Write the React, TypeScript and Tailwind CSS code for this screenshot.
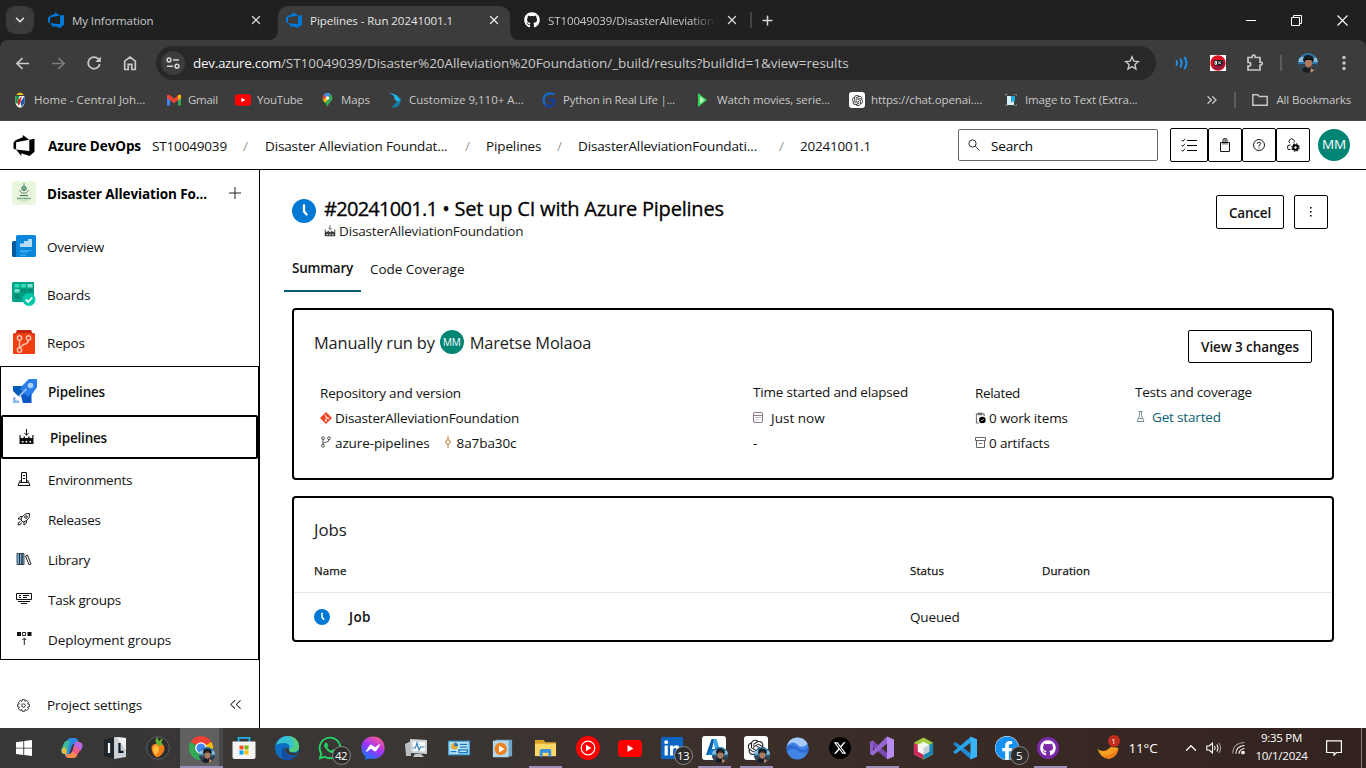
import type { ReactNode } from "react";
import { FaGithub, FaWhatsapp, FaFacebook, FaFacebookMessenger } from "react-icons/fa";
import { FaXTwitter } from "react-icons/fa6";
import { RiOpenaiFill } from "react-icons/ri";
import { X, Plus, ChevronDown, ChevronUp, ChevronsRight, ChevronsLeft } from "lucide-react";

type C = { className?: string };

/* ---------- shared drawings ---------- */

const DevOps = ({ className = "" }: C) => (
  <svg viewBox="0 0 24 24" className={`shrink-0 ${className}`} fill="currentColor">
    <path d="M0 8.877L2.247 5.91l8.405-3.416V.022l7.37 5.393L2.966 8.338v8.225L0 15.707zm24-4.45v14.651l-5.753 4.9-9.303-3.057v3.056l-5.978-7.416 15.057 1.798V5.415z" />
  </svg>
);

const Face = ({ className = "" }: C) => (
  <svg viewBox="0 0 20 20" className={`shrink-0 rounded-full ${className}`}>
    <rect width="20" height="20" fill="#2b78a8" />
    <path d="M0 6q5-4 9-1t11-2v6H0z" fill="#8dbedb" />
    <path d="M0 11h20v9H0z" fill="#34424f" />
    <path d="M5 7.500q0-5.500 5-5.500t6 5l-1 2H6z" fill="#171c25" />
    <ellipse cx="10.500" cy="10" rx="3.600" ry="4.600" fill="#b07a5c" />
    <path d="M7 7h7.500V5.500H7z" fill="#0c0f14" />
    <path d="M3 20q1-6 6-6l1 2 2-2q4 0 5 6z" fill="#1a1c24" />
    <path d="M13 14.500l4 3.500-2 2h-3z" fill="#c08866" />
  </svg>
);

const Youtube = ({ className = "" }: C) => (
  <svg viewBox="0 0 24 17" className={`shrink-0 ${className}`}>
    <rect width="24" height="17" rx="4" fill="#f00" />
    <path d="M9.500 5v7l6-3.500z" fill="#fff" />
  </svg>
);

const Clock = ({ className = "" }: C) => (
  <svg viewBox="0 0 24 24" className={`shrink-0 ${className}`}>
    <circle cx="12" cy="12" r="12" fill="#0078d4" />
    <path d="M12 6.500v6l2.600 3" fill="none" stroke="#fff" strokeWidth="2.300" strokeLinecap="round" strokeLinejoin="round" />
  </svg>
);

const Build = ({ className = "" }: C) => (
  <svg viewBox="0 0 16 16" className={`shrink-0 ${className}`}>
    <path d="M1 6h1.200v3H5V7.500h1.400V9h3.200V7.500H11V9h2.800V6H15v9H1z" fill="#111" />
    <path d="M8 0v6M5.800 4 8 6.200 10.200 4" fill="none" stroke="#111" />
    <path d="M3.500 12H5v1.500H3.500zM7.200 12h1.500v1.500H7.200zM11 12h1.500v1.500H11z" fill="#fff" />
  </svg>
);

/* ---------- browser chrome ---------- */

const Divider = ({ className = "" }: C) => <span className={`h-4 w-[1.500px] shrink-0 bg-[#5c5c5c] ${className}`} />;

function TabStrip() {
  return (
    <div className="flex h-10 shrink-0 bg-[#1f2120] text-[11.5px] tracking-[-0.1px] text-[#c9c9c9]">
      <div className="ml-[6px] mt-[6px] flex h-7 w-7 shrink-0 items-center justify-center rounded-[9px] bg-[#3a3b3a]">
        <ChevronDown className="h-[14px] w-[14px] text-[#e8e8e8]" strokeWidth={2.6} />
      </div>
      <div className="flex w-[234px] items-center pl-[14px]">
        <DevOps className="h-4 w-4 text-[#0078d7]" />
        <span className="ml-2 pt-px">My Information</span>
        <X className="ml-auto mr-[5px] h-[14px] w-[14px] text-[#d5d5d5]" strokeWidth={2.3} />
      </div>
      <svg viewBox="0 0 10 10" className="mt-[30px] h-[10px] w-[10px] text-[#3c3c3c]"><path d="M10 0v10H0Q10 10 10 0z" fill="currentColor" /></svg>
      <div className="mt-[6px] flex w-[232px] items-center rounded-t-[10px] bg-[#3c3c3c] pb-[6px] pl-2 text-[#e6e6e6]">
        <DevOps className="h-4 w-4 text-[#0078d7]" />
        <span className="ml-2 pt-px tracking-[-0.04px]">Pipelines - Run 20241001.1</span>
        <X className="ml-auto mr-[9px] h-[14px] w-[14px]" strokeWidth={2.3} />
      </div>
      <svg viewBox="0 0 10 10" className="mt-[30px] h-[10px] w-[10px] text-[#3c3c3c]"><path d="M0 0v10H10Q0 10 0 0z" fill="currentColor" /></svg>
      <div className="flex w-[231px] items-center pl-1">
        <FaGithub className="h-4 w-4 shrink-0 text-white" />
        <span className="ml-2 w-[168px] overflow-hidden whitespace-nowrap pt-px [mask-image:linear-gradient(90deg,#000_85%,transparent)]">ST10049039/DisasterAlleviation</span>
        <X className="ml-[9px] h-[14px] w-[14px] shrink-0 text-[#d5d5d5]" strokeWidth={2.3} />
      </div>
      <div className="flex items-center">
        <Divider className="-ml-px bg-[#444]" />
        <Plus className="ml-[8px] h-[15px] w-[15px] text-[#d8d8d8]" strokeWidth={2.4} />
      </div>
      <div className="ml-auto mr-[18px] flex items-center gap-[35px]">
        <svg viewBox="0 0 10 10" className="h-[10px] w-[10px]"><path d="M0 5.500h10" stroke="#fff" /></svg>
        <svg viewBox="0 0 11 11" className="h-[11px] w-[11px]"><path d="M.5 2.500h8v8h-8zM2.500 2.500v-2h8v8h-2" fill="none" stroke="#fff" /></svg>
        <svg viewBox="0 0 11 11" className="h-[11px] w-[11px]"><path d="M.5.5l10 10m0-10l-10 10" stroke="#fff" strokeWidth="1.100" /></svg>
      </div>
    </div>
  );
}

function AddressBar() {
  return (
    <div className="shrink-0 bg-[#1f2120]">
      <div className="flex h-[46px] items-center rounded-t-lg bg-[#3c3c3c] pl-[15px] text-[#c8c8c8]">
        <svg viewBox="0 0 16 16" className="h-[15px] w-[15px]"><path d="M15 8H2.500M8 2.200 2 8l6 5.800" fill="none" stroke="currentColor" strokeWidth="1.800" /></svg>
        <svg viewBox="0 0 16 16" className="ml-[21px] h-[15px] w-[15px] text-[#7c7c7c]"><path d="M1 8h12.500M8 2.200 14 8l-6 5.800" fill="none" stroke="currentColor" strokeWidth="1.800" /></svg>
        <svg viewBox="0 0 16 16" className="ml-[20px] h-4 w-4"><path d="M13.700 9a5.800 5.800 0 1 1-1.400-5L14 5.600" fill="none" stroke="currentColor" strokeWidth="1.800" /><path d="M14.800 1.500v5.500H9.300z" fill="currentColor" /></svg>
        <svg viewBox="0 0 16 16" className="ml-[20px] h-4 w-4"><path d="M2.700 6.200 8 2l5.300 4.200v8.300h-3.500V9.300H6.200v5.200H2.700z" fill="none" stroke="currentColor" strokeWidth="1.700" /></svg>
        <div className="ml-[18px] flex h-[34px] w-[1000px] items-center rounded-full bg-[#282828] pl-[5px]">
          <div className="flex h-6 w-6 items-center justify-center rounded-full bg-[#3d3d3d]">
            <svg viewBox="0 0 14 12" className="h-3 w-[14px]" fill="none" stroke="#d8d8d8" strokeWidth="1.500"><circle cx="3" cy="3" r="1.900" /><path d="M7 3h6M1 9.200h6" /><circle cx="11" cy="9.200" r="1.900" /></svg>
          </div>
          <div className="ml-2 whitespace-nowrap text-[13.5px] leading-5">
            <span className="tracking-[-0.31px] text-[#f2f2f2]">dev.azure.com</span>
            <span className="tracking-[-0.045px]">/ST10049039/Disaster%20Alleviation%20Foundation/_build/results?buildId=1&amp;view=results</span>
          </div>
          <svg viewBox="0 0 16 16" className="ml-auto mr-[16px] h-4 w-4"><path d="M8 1.800l1.800 4.300 4.600.4-3.500 3 1 4.500L8 11.600 4 14l1.100-4.500-3.500-3 4.600-.4z" fill="none" stroke="currentColor" strokeWidth="1.400" /></svg>
        </div>
        <svg viewBox="0 0 16 16" className="ml-[19px] h-4 w-4" fill="none" stroke="#1a93f5" strokeWidth="1.900" strokeLinecap="round"><path d="M1.500 6q1 2 0 4M5.500 4.300q2.200 3.700 0 7.400M9.700 2.500q3.500 5.500 0 11" /></svg>
        <svg viewBox="0 0 16 16" className="ml-[19px] h-4 w-4"><rect width="16" height="16" fill="#fff" /><circle cx="8" cy="8" r="7.700" fill="#e01225" /><path d="M3 13q5 4 10-1l2-4-2-3z" fill="#8f1a3e" /><rect x="3.500" y="5" width="9" height="5.500" rx="1" fill="#111" /><path d="M5 6.300h1.500v3H5zM8 6.300l3 3m0-3l-3 3" stroke="#fff" fill="none" /></svg>
        <svg viewBox="0 0 18 18" className="ml-[20px] h-[18px] w-[18px]"><path d="M2 3.500h4.200V2.700a1.500 1.500 0 0 1 3 0v.8h4.800v4.600h.8a1.500 1.500 0 0 1 0 3H14V16H2v-3.800h.8a1.900 1.900 0 0 0 0-3.800H2z" fill="none" stroke="currentColor" strokeWidth="1.700" /></svg>
        <Divider className="ml-[16px]" />
        <Face className="ml-[16px] h-5 w-5" />
        <svg viewBox="0 0 4 16" className="ml-[24px] h-4 w-1"><circle cx="2" cy="2.500" r="1.700" fill="currentColor" /><circle cx="2" cy="8" r="1.700" fill="currentColor" /><circle cx="2" cy="13.500" r="1.700" fill="currentColor" /></svg>
      </div>
    </div>
  );
}

const Bookmark = ({ w, label, children }: { w: string; label: string; children: ReactNode }) => (
  <div className={`flex shrink-0 items-center gap-[6px] whitespace-nowrap ${w}`}>
    {children}
    <span>{label}</span>
  </div>
);

function Bookmarks() {
  return (
    <div className="flex h-[35px] shrink-0 items-center border-b border-[#4a4a4a] bg-[#3c3c3c] pb-[6px] pl-3 text-[11.5px] text-[#c8c8c8]">
      <Bookmark w="w-[154px] tracking-[0.06px]" label="Home - Central Joh...">
        <svg viewBox="0 0 16 16" className="h-4 w-4"><path d="M4 3q4-5 8 0z" fill="#f2c21a" /><path d="M3.500 4h9v7q-1 4-4.500 4.800Q4.500 15 3.500 11z" fill="#fff" /><path d="M3.500 4h4L5.500 12l-2-1z" fill="#1a9a4a" /><path d="M12.500 4l-4 6 1 5 3-4z" fill="#1c57a5" /><path d="M6 8l4-4-2 8-2 2z" fill="#d9232e" /></svg>
      </Bookmark>
      <Bookmark w="w-[69px] tracking-[-0.28px]" label="Gmail">
        <svg viewBox="0 0 16 16" className="h-4 w-4"><path d="M1 4v9.500h3V7z" fill="#4285f4" /><path d="M15 4v9.500h-3V7z" fill="#34a853" /><path d="M1 3.500Q2 2 3.500 3L8 6.600 12.500 3Q14 2 15 3.500V6l-7 5.200L1 6z" fill="#ea4335" /><path d="M12 3.300q2-1.300 3 .2V6l-3 2.200z" fill="#fbbc04" /></svg>
      </Bookmark>
      <Bookmark w="w-[85px] tracking-[-0.2px]" label="YouTube"><Youtube className="h-3 w-4" /></Bookmark>
      <Bookmark w="w-[67px] tracking-[-0.1px]" label="Maps">
        <svg viewBox="0 0 16 16" className="h-4 w-[15px]"><path d="M8 .5a5.300 5.300 0 0 1 5.300 5.300C13.300 9.500 9 11 8 15.500 7 11 2.700 9.500 2.700 5.800A5.300 5.300 0 0 1 8 .5z" fill="#34a853" /><path d="M8 .5a5.300 5.300 0 0 0-4 1.900l3 3L11.500 1.800A5 5 0 0 0 8 .5z" fill="#4285f4" /><path d="M4 2.400Q2 5 3.200 8l4-3z" fill="#ea4335" /><path d="M3.200 8Q4 9.500 5.300 10.800L9.700 6 7.200 5z" fill="#fbbc04" /><circle cx="8" cy="5.800" r="1.900" fill="#fff" /></svg>
      </Bookmark>
      <Bookmark w="w-[154px] tracking-[0.02px]" label="Customize 9,110+ A...">
        <svg viewBox="0 0 16 16" className="h-4 w-4"><path d="M1.500.5l8 2.500 4.500 5-2.500 2Q7 9 7 4z" fill="#19b5ea" /><path d="M14 8l-2.500 6.500L4 16l6-6z" fill="#117ea8" /></svg>
      </Bookmark>
      <Bookmark w="w-[154px] tracking-[-0.22px]" label="Python in Real Life |...">
        <svg viewBox="0 0 16 16" className="h-4 w-4" fill="none" strokeWidth="2.400"><path d="M13.500 2.200Q6-.2 3.200 5q-1.800 6 2.300 8.500" stroke="#1668c4" /><path d="M4 12.500q4 3.600 7.500.5 2-2 1.500-5H7.500" stroke="#1540a0" /></svg>
      </Bookmark>
      <Bookmark w="w-[154px] tracking-[-0.13px]" label="Watch movies, serie...">
        <svg viewBox="0 0 16 16" className="h-4 w-4"><path d="M3 1l9 7-9 7z" fill="#3bd45b" /><path d="M5 4.500l4.500 3.500L5 12z" fill="#b5f5be" /></svg>
      </Bookmark>
      <Bookmark w="w-[154px] tracking-[-0.12px]" label="https://chat.openai....">
        <span className="flex h-4 w-4 shrink-0 items-center justify-center rounded-[3px] bg-white"><RiOpenaiFill className="h-[13px] w-[13px] text-[#222]" /></span>
      </Bookmark>
      <Bookmark w="w-[200px] tracking-[-0.15px]" label="Image to Text (Extra...">
        <svg viewBox="0 0 16 16" className="h-4 w-4"><path d="M2.500 4V2.500H5M11 2.500h2.500V4M2.500 12v1.500H5M13.500 12v1.500H11" fill="none" stroke="#777" /><path d="M4 4h7v9H4z" fill="#d9f0f8" /><path d="M8 4h4v5l-4 1.500z" fill="#25a7d8" /></svg>
      </Bookmark>
      <ChevronsRight className="ml-px h-4 w-4" strokeWidth={2} />
      <Divider className="ml-[14px]" />
      <svg viewBox="0 0 16 14" className="ml-[16px] h-[14px] w-4"><path d="M.8 1.800h5l1.500 1.700h7.900v8.700H.8z" fill="none" stroke="currentColor" strokeWidth="1.400" /></svg>
      <span className="ml-[9px] whitespace-nowrap tracking-[-0.16px]">All Bookmarks</span>
    </div>
  );
}

/* ---------- Azure DevOps header ---------- */

const HeadBtn = ({ children, w = "w-[34px]" }: { children: ReactNode; w?: string }) => (
  <div className={`flex h-[34px] items-center justify-center rounded-[2px] border border-black ${w}`}>{children}</div>
);

function Header() {
  return (
    <header className="flex h-[49px] shrink-0 items-center whitespace-nowrap border-b border-black bg-white pl-[13px] text-[13.5px] tracking-[-0.13px] text-[#111]">
      <DevOps className="h-[21px] w-[22px] text-black" />
      <div className="ml-[13px] flex pt-[2px]">
        <span className="w-[104px] font-bold tracking-[-0.09px] text-black">Azure DevOps</span>
        <span className="w-[91px] tracking-[-0.16px]">ST10049039</span>
        <span className="w-[22px] text-[#999]">/</span>
        <span className="w-[200px]">Disaster Alleviation Foundat...</span>
        <span className="w-[21px] text-[#999]">/</span>
        <span className="w-[71px]">Pipelines</span>
        <span className="w-[21px] text-[#999]">/</span>
        <span className="w-[201px]">DisasterAlleviationFoundati...</span>
        <span className="w-[21px] text-[#999]">/</span>
        <span className="tracking-[-0.2px]">20241001.1</span>
      </div>
      <div className="-mt-px ml-auto flex h-8 w-[200px] items-center rounded-[2px] border border-[#666] pl-[9px] text-black">
        <svg viewBox="0 0 12 12" className="h-3 w-3" fill="none" stroke="#333"><circle cx="4.500" cy="4.500" r="3.600" /><path d="M7.200 7.200l4.300 4.300" /></svg>
        <span className="ml-[11px] pt-[3px]">Search</span>
      </div>
      <div className="-mt-px ml-3 flex">
        <HeadBtn w="w-[38px]">
          <svg viewBox="0 0 16 14" className="h-[14px] w-4" fill="none" stroke="#000"><path d="M6 2.500h10M6 7.500h10M6 12.500h10" /><path d="M.5 2l1.200 1.300L4 .8M.5 7l1.200 1.300L4 5.800M.5 12l1.200 1.300L4 10.800" strokeWidth=".9" /></svg>
        </HeadBtn>
        <HeadBtn>
          <svg viewBox="0 0 12 14" className="h-[14px] w-3" fill="none" stroke="#000" strokeWidth=".9"><path d="M1.500 4.500h9v9h-9zM4 6.500V2Q4 .5 5.500.5H6v6M6 .5h.500Q8 .5 8 2v4.500" /></svg>
        </HeadBtn>
        <HeadBtn>
          <svg viewBox="0 0 12 12" className="h-3 w-3" fill="none" stroke="#000" strokeWidth=".9"><circle cx="6" cy="6" r="5.500" /><path d="M4.300 4.800Q4.300 3.200 6 3.200T7.700 4.800Q7.500 5.500 6 6.400V7.500M6 8.500v1" /></svg>
        </HeadBtn>
        <HeadBtn>
          <svg viewBox="0 0 14 14" className="h-[14px] w-[14px]" fill="none" stroke="#000"><path d="M3.800 5.200A2.600 2.600 0 1 1 8 4.600M4.500 7Q1 6.800 1.500 9l.6 2.500H4.500" strokeWidth=".9" /><circle cx="9.500" cy="9.500" r="2.200" strokeWidth="2" /><circle cx="9.500" cy="9.500" r="3.600" strokeWidth="1.200" strokeDasharray="1.600 1.230" /></svg>
        </HeadBtn>
      </div>
      <div className="-mt-px ml-2 mr-4 flex h-8 w-8 items-center justify-center rounded-full bg-[#008575] text-[13.500px] text-white">MM</div>
    </header>
  );
}

/* ---------- sidebar ---------- */

const HubRow = ({ icon, label }: { icon: ReactNode; label: string }) => (
  <div className="flex h-12 items-center pl-3 tracking-[-0.2px]">
    {icon}
    <span className="ml-[11px]">{label}</span>
  </div>
);

const SubRow = ({ icon, label, track = "tracking-[-0.28px]" }: { icon: ReactNode; label: string; track?: string }) => (
  <div className={`flex h-10 items-center pl-[14px] ${track}`}>
    <span className="flex w-[18px] justify-center pb-[2px]">{icon}</span>
    <span className="ml-[15px]">{label}</span>
  </div>
);

function Sidebar() {
  return (
    <nav className="flex w-[260px] shrink-0 flex-col border-r border-black bg-white text-[13.5px] text-[#111]">
      <div className="mb-[5px] flex h-12 items-center pl-3">
        <svg viewBox="0 0 24 24" className="-mt-[3px] h-6 w-6 shrink-0"><rect width="24" height="24" rx="3" fill="#e9f5dc" /><circle cx="12" cy="7.500" r="2.800" fill="#6f9c86" /><path d="M12 2v5M7 9l3 3h4l3-3" fill="none" stroke="#6b9580" /><path d="M8 14.500h8" stroke="#4f7f68" strokeWidth="1.300" /><path d="M5 17.500h14" stroke="#5f9a7a" strokeWidth="1.500" strokeDasharray="1.800 .5" /><path d="M8 20h8" stroke="#c5d8bb" /></svg>
        <span className="ml-[11px] whitespace-nowrap pt-px font-bold tracking-[-0.1px] text-black">Disaster Alleviation Fo...</span>
        <svg viewBox="0 0 12 12" className="-mt-[3px] ml-auto mr-[18px] h-3 w-3"><path d="M6 0v12M0 6h12" stroke="#222" /></svg>
      </div>
      <HubRow label="Overview" icon={
        <svg viewBox="0 0 24 24" className="-mt-[3px] h-6 w-6"><path d="M0 8.500Q0 7 1.500 7H5v16H1.500Q0 23 0 21.500z" fill="#005ba1" /><path d="M4 2.500Q4 1 5.500 1H22.500Q24 1 24 2.500v19q0 1.500-1.500 1.500H3.500Q4 22.500 4 21z" fill="#0a86dd" /><path d="M8 9.500h4V7h4V5h4v8H8z" fill="#b4def8" /><path d="M8 16h8v2.500H8zM16 16h4v1h-4zM8 20.500h6v1.500H8z" fill="#39a5ee" /></svg>} />
      <HubRow label="Boards" icon={
        <svg viewBox="0 0 24 24" className="-mt-[3px] h-6 w-6"><path d="M0 1.500Q0 0 1.500 0H22v20H1.500Q0 20 0 18.500z" fill="#00a287" /><path d="M2.500 2h5v3.500h-5zM9 2h5v3.500H9z" fill="#32dab8" /><path d="M15.500 2h5v3.500h-5zM2.500 7h5v3.500h-5z" fill="#a5f5e3" opacity=".75" /><path d="M9 7h5v3.500H9zM2.500 12h5v5h-5zM15.500 7h5v3.500h-5z" fill="#0c7e6d" opacity=".6" /><circle cx="17" cy="17.500" r="6.500" fill="#00c9ab" /><path d="M13.800 17.500l2.400 2.400 4-4.400" fill="none" stroke="#fff" strokeWidth="1.800" /></svg>} />
      <HubRow label="Repos" icon={
        <svg viewBox="0 0 24 24" className="-mt-[3px] h-6 w-6"><path d="M5 0h14l1.500 4H3.500z" fill="#c42410" /><path d="M1 4Q1 3 2.500 3H22q1 0 1 1.200V23q0 1-1 1H2q-1 0-1-1z" fill="#f03e10" /><g fill="none" stroke="#ffc4b0" strokeWidth="1.400"><circle cx="7.500" cy="8" r="2.200" /><circle cx="16.500" cy="8" r="2.200" /><circle cx="7.500" cy="20" r="2.200" /><path d="M7.500 10.200v7.600M16.500 10.200Q16 14 11.500 14.500L8 17.700" /></g></svg>} />
      <div className="-mt-px flex flex-col border border-black">
        <div className="flex h-12 items-center pl-3 font-semibold tracking-[-0.19px]">
          <svg viewBox="0 0 24 24" className="h-6 w-6"><path d="M15 1q5-1 9-1v8l-7 10L8 8z" fill="#1f7ae8" /><path d="M0 7h9l5 6-6 4H5L0 12z" fill="#005ab8" /><path d="M8 17l9-7 1.500 6.500V24h-8.500z" fill="#0b57c4" /><path d="M16 0h8v8l-9 10-8-8z" fill="#2b7de9" /><circle cx="17.500" cy="6.500" r="2.800" fill="#a9cffb" /><path d="M13.500 10l-7.500 7.500" stroke="#8fbdf8" strokeWidth="1.800" /><path d="M0 18h2.500v3.500H6V24H0zM3 15l3 3" fill="#8db5ef" /></svg>
          <span className="ml-[11px] pt-[2px]">Pipelines</span>
        </div>
        <div className="flex h-11 items-center rounded-[2px] border-2 border-black pl-[15px] font-semibold tracking-[-0.19px] text-[#111]">
          <Build className="-mt-px h-4 w-[17px]" />
          <span className="ml-[15px] pt-[2px]">Pipelines</span>
        </div>
        <div className="-mb-px pt-px">
          <SubRow label="Environments" icon={<svg viewBox="0 0 14 14" className="h-[14px] w-[14px]" fill="none" stroke="#111"><path d="M4.500 10V.5h5V10M6 3.500h2M6 6.500h2M3 10.500h8M3.500 8 1 13.500h12L10.500 8" /></svg>} />
          <SubRow label="Releases" icon={<svg viewBox="0 0 14 14" className="h-[14px] w-[14px]" fill="none" stroke="#222"><path d="M12.500 1.500Q8 .5 5 5l-1 3 2 2 3-1q4.500-3 3.500-7.500zM5.500 4.500H3L1 7h3M9.500 8.500V11L7 13v-3M3.500 9.500l-2 1-.5 2.500 2.500-.5 1-2" /><circle cx="9" cy="5" r="1.300" /></svg>} />
          <SubRow label="Library" icon={<svg viewBox="0 0 16 14" className="h-[14px] w-4" fill="none" stroke="#222"><path d="M1 1.500h2.500v11H1zM3.500 1.500H6v11H3.500zM6 1.500h2v11H6z" fill="#7db9e8" strokeWidth=".8" /><path d="M9.500 4l2-1 3.500 9-2 .7z" /></svg>} />
          <SubRow label="Task groups" icon={<svg viewBox="0 0 18 14" className="h-[14px] w-[18px]" fill="none" stroke="#111"><path d="M1.500 1.500h15v6h-15zM4 3.500h2M4 5.500h2M8 3.500h6M8 5.500h4M3 9.500h12M6 11.500h6" /></svg>} />
          <SubRow label="Deployment groups" track="tracking-[-0.08px]" icon={<svg viewBox="0 0 16 16" className="h-4 w-4"><path d="M1 1h4v4H1zM11.500 1h4v4h-4z" fill="#111" /><path d="M6.500 1.500h3v3h-3zM8.300 14V7M6.300 9l2-2 2 2" fill="none" stroke="#222" /></svg>} />
        </div>
      </div>
      <div className="mb-px mt-auto flex h-11 items-center pl-[17px] tracking-[-0.1px]">
        <svg viewBox="0 0 14 14" className="h-[13px] w-[13px]" fill="none" stroke="#222"><path d="M5.600.7h2.800l.4 1.900 1.700-1 2 2-1.100 1.700 1.900.4v2.600l-1.900.4 1.100 1.700-2 2-1.700-1.100-.4 1.900H5.600l-.4-1.900-1.700 1.100-2-2 1.100-1.700L.7 8.300V5.700l1.900-.4-1.100-1.700 2-2 1.700 1z" /><circle cx="7" cy="7" r="1.900" /></svg>
        <span className="ml-[17px]">Project settings</span>
        <ChevronsLeft className="mb-[2px] ml-auto mr-[14px] h-[19px] w-[19px] text-[#222]" strokeWidth={1.3} />
      </div>
    </nav>
  );
}

/* ---------- run summary ---------- */

const Line = ({ icon, children, gap = "gap-[3px]" }: { icon?: ReactNode; children: ReactNode; gap?: string }) => (
  <div className={`flex h-[25px] items-center ${gap}`}>{icon}<span>{children}</span></div>
);

function Summary() {
  return (
    <section className="mx-8 mt-4 flex h-[172px] shrink-0 flex-col rounded border-2 border-black">
      <div className="flex justify-between pl-5 pr-5 pt-5">
        <div className="flex h-[26px] items-center text-[16.4px] tracking-[-0.16px] text-[#222]">
          <span>Manually run by</span>
          <span className="ml-[5px] mr-[6px] flex h-6 w-6 items-center justify-center rounded-full bg-[#008575] text-[10px] tracking-[-0.2px] text-white -mt-[2px]">MM</span>
          <span>Maretse Molaoa</span>
        </div>
        <button className="h-[33px] w-[124px] rounded-[2px] border border-black pt-[2px] font-semibold tracking-[-0.1px]">View 3 changes</button>
      </div>
      <div className="mt-[18px] grid grid-cols-[433px_222px_160px_1fr] pl-[26px] tracking-[-0.16px]">
        <div>
          <Line>Repository and version</Line>
          <Line icon={<svg viewBox="0 0 12 12" className="-mt-[2px] h-3 w-3"><path d="M6 0 12 6 6 12 0 6z" fill="#f4401c" /><path d="M4.500 2.500l1.500 1.600V9M6 4.500l2 1.800" stroke="#fff" fill="none" strokeWidth=".9" /><circle cx="6" cy="8.700" r=".9" fill="#fff" /><circle cx="8.200" cy="6.300" r=".9" fill="#fff" /></svg>}>DisasterAlleviationFoundation</Line>
          <div className="flex">
            <Line icon={<svg viewBox="0 0 12 12" className="-mt-1 h-3 w-3" fill="none" stroke="#444" strokeWidth=".9"><circle cx="3" cy="2.200" r="1.400" /><circle cx="9" cy="2.200" r="1.400" /><circle cx="3" cy="9.800" r="1.400" /><path d="M3 3.600v4.800M9 3.600Q9 6 6.500 6T3.200 8" /></svg>}><span className="tracking-[-0.11px]">azure-pipelines</span></Line>
            <div className="ml-3 tracking-[-0.08px]"><Line icon={<svg viewBox="0 0 12 12" className="-mt-1 h-3 w-3" fill="none" stroke="#b87a2c"><circle cx="6" cy="6" r="2.200" /><path d="M6 0v3.800M6 8.200V12" /></svg>}>8a7ba30c</Line></div>
          </div>
        </div>
        <div className="-mt-px">
          <Line><span className="tracking-[-0.18px]">Time started and elapsed</span></Line>
          <div className="pt-px tracking-[0.03px]">
            <Line gap="gap-[8px]" icon={<svg viewBox="0 0 10 11" className="-mt-[3px] h-[11px] w-[10px]" fill="none" stroke="#7c6a7c" strokeWidth=".9"><path d="M.5 2Q.5.5 2 .5h6Q9.500.5 9.500 2v7q0 1.500-1.500 1.500H2Q.5 10.500.5 9zM.5 3.500h9" /><path d="M2.500 5.500h5M2.500 8h3" strokeDasharray="1 1" /></svg>}>Just now</Line>
            <Line>-</Line>
          </div>
        </div>
        <div>
          <Line><span className="tracking-[-0.35px]">Related</span></Line>
          <Line icon={<svg viewBox="0 0 12 12" className="-mt-[2px] h-3 w-[11px]"><path d="M4 11.500H1.500v-10H10V4M3.500.7h4v1.800h-4z" fill="none" stroke="#555" /><circle cx="8" cy="8.200" r="3.600" fill="#000" /><path d="M6.500 8.200l1.100 1.100 2-2.200" stroke="#fff" fill="none" strokeWidth=".8" /></svg>}>0 work items</Line>
          <Line icon={<svg viewBox="0 0 11 11" className="-mt-[3px] h-[11px] w-[11px]" fill="none" stroke="#555" strokeWidth=".9"><path d="M.5.5h10v3H.5zM1.500 3.500v7h8v-7M4 6.500h3" /></svg>}>0 artifacts</Line>
        </div>
        <div className="-mt-px">
          <Line><span className="tracking-[-0.2px]">Tests and coverage</span></Line>
          <div className="text-[#0b5e75]"><Line gap="gap-[6px]" icon={<svg viewBox="0 0 11 11" className="-mt-[3px] h-[11px] w-[11px]" fill="none" stroke="#6b8288" strokeWidth=".9"><path d="M3.500.5h4M4.500.5v4l-2.500 6h7l-2.500-6v-4M3.500 7.500h4" /></svg>}>Get started</Line></div>
        </div>
      </div>
    </section>
  );
}

function Jobs() {
  return (
    <section className="mx-8 mt-4 h-[146px] shrink-0 rounded border-2 border-black">
      <h2 className="flex h-[62px] items-center pl-5 pt-[2px] text-[16.800px] tracking-[-0.05px] text-[#222]">Jobs</h2>
      <div className="grid h-[33px] grid-cols-[596px_132px_1fr] border-b border-[#e5e5e5] pl-5 pt-0.5 text-[11.500px] tracking-[0.1px] [-webkit-text-stroke:0.25px_#111]">
        <span>Name</span><span>Status</span><span>Duration</span>
      </div>
      <div className="grid h-12 grid-cols-[35px_561px_1fr] items-center pl-5">
        <Clock className="h-4 w-4" />
        <span className="font-semibold tracking-[0.4px]">Job</span>
        <span className="tracking-[-0.16px]">Queued</span>
      </div>
    </section>
  );
}

function Main() {
  return (
    <main className="flex flex-1 flex-col bg-white text-[13.5px] text-[#111]">
      <div className="flex h-[74px] shrink-0 pl-8 pt-[25px]">
        <Clock className="mt-[4px] h-6 w-6" />
        <div className="ml-2">
          <h1 className="whitespace-nowrap text-[20px] leading-7 tracking-[-0.2px] text-black [-webkit-text-stroke:0.3px_#000]"><span className="tracking-[-0.72px]">#20241001.1</span> • Set up CI with Azure Pipelines</h1>
          <div className="-mt-px flex h-[18px] items-center gap-[3px] tracking-[-0.15px] text-[#222]"><Build className="h-3 w-3 opacity-80" />DisasterAlleviationFoundation</div>
        </div>
        <button className="ml-auto h-[34px] w-[68px] rounded-[2px] border border-black pt-[2px] font-semibold tracking-[-0.2px]">Cancel</button>
        <button className="ml-[10px] mr-[38px] flex h-[34px] w-[34px] items-center justify-center rounded-[2px] border border-black">
          <svg viewBox="0 0 2 10" className="h-[10px] w-0.5"><path d="M0 0h1.600v1.600H0zM0 4h1.600v1.600H0zM0 8h1.600v1.600H0z" fill="#111" /></svg>
        </button>
      </div>
      <div className="flex h-12 shrink-0 pl-6 leading-[48px]">
        <span className="border-b-2 border-[#005a75] px-2 font-semibold tracking-[-0.24px]">Summary</span>
        <span className="ml-[9px] pt-px tracking-[-0.03px]">Code Coverage</span>
      </div>
      <Summary />
      <Jobs />
    </main>
  );
}

/* ---------- taskbar ---------- */

const App43 = ({ children, open = false, active = false }: { children: ReactNode; open?: boolean; active?: boolean }) => (
  <div className={`relative flex h-10 w-[43px] shrink-0 items-center justify-center ${active ? "bg-[linear-gradient(90deg,#606060_91%,#484848_91%)]" : ""}`}>
    {children}
    {open && <span className={`absolute bottom-0 h-0.5 bg-[#9a8fb8] ${active ? "left-0 w-[43px]" : "left-[5px] w-[33px]"}`} />}
  </div>
);
const App42 = ({ children, open = false }: { children: ReactNode; open?: boolean }) => (
  <div className="relative flex h-10 w-[42px] shrink-0 items-center justify-center">
    {children}
    {open && <span className="absolute bottom-0 left-[5px] h-0.5 w-[33px] bg-[#9a8fb8]" />}
  </div>
);
const Count = ({ children }: { children: ReactNode }) => (
  <span className="absolute bottom-[3px] left-[23px] flex h-[19px] w-[19px] items-center justify-center rounded-full border border-[#888] bg-[#2f2d2b] text-[11.5px] font-medium tracking-[-0.5px] text-white">{children}</span>
);
const MiniFace = () => <Face className="absolute bottom-[5px] left-[19px] h-4 w-4" />;

function Taskbar() {
  return (
    <footer className="flex h-10 shrink-0 items-center bg-[linear-gradient(90deg,#383736,#3a3634_30%,#3b2d28_60%,#33231e)] text-white">
      <div className="flex w-[50.5px] shrink-0 justify-center pr-[3px]">
        <svg viewBox="0 0 16 16" className="h-4 w-4"><path d="M0 2.200l7.300-1v6.500H0zM8.200 1L16 0v7.700H8.200zM0 8.400h7.300v6.500L0 13.900zM8.200 8.400H16V16l-7.800-1.100z" fill="#fff" /></svg>
      </div>
      <App43><svg viewBox="0 0 22 22" className="h-[22px] w-[22px]"><path d="M6 3.500Q7 1 9.500 1H14q2.500 0 3.200 2.500L18 6.500h-4q-2.500 0-3.300 2.500L8 18Q7 20.500 4.500 20l-1-3Q-1 16.500.5 12z" fill="#2a8ae5" /><path d="M1 11l2-5q1-2.500 3.500-2.500L9 4 6.500 14Q6 17 3 17-1 16 1 11z" fill="#3db99c" /><path d="M1 12l3-2 2 5-1 2Q0 17.500 1 12z" fill="#f3bb32" /><path d="M16 18.500Q15 21 12.500 21H8q-2.500 0-3.200-2.500L4.500 17H8q2.500 0 3.300-2.500L14 5.500Q15 4.500 18 5q4 1 3 5z" fill="#ec5d8d" /><path d="M4.500 17H8q2.500 0 3.200-2.500l5 3.500Q15 21 12.500 21H8q-3 0-3.500-4z" fill="#f58c4a" /><path d="M14 5.500h4q5 .5 3 5.500l-1.500 3q-3-6-7-3.500z" fill="#b768e0" /></svg></App43>
      <App43><svg viewBox="0 0 24 24" className="h-6 w-6"><path d="M1 3.500L11 1v22L1 20z" fill="#20252c" /><path d="M11 1l12 1v19l-12 2z" fill="#c9d0d6" /><path d="M13 1l10 1v12z" fill="#eef1f3" /><path d="M6 7v10" stroke="#f5f5f5" strokeWidth="2.200" /><path d="M16.500 7v8.800h4" fill="none" stroke="#15191e" strokeWidth="2.200" /></svg></App43>
      <App43><svg viewBox="0 0 24 24" className="h-6 w-6"><circle cx="12" cy="12" r="11.300" fill="#2b2d2e" stroke="#5b5e60" /><path d="M9.500 8q-4 0-4 4.500 1 7 5.500 9 6-2 7.500-8.500 0-4.500-3.500-5.500-3.500-.5-5.500.5z" fill="#f57f17" /><path d="M10 9q-3 1-3 4.500 1 4 3 6 3-4 3-8z" fill="#ffbe3c" /><path d="M10.500 8Q8 3 12 1q-.5 3 1.500 4Q15 2 17 3q-1.500 1-1.500 4l1.500 1-3.500 2z" fill="#62b334" /></svg></App43>
      <App43 active open><svg viewBox="0 0 24 24" className="-ml-px h-6 w-6"><path d="M12 12L1.600 6a12 12 0 0 1 20.800 0z" fill="#ea4335" /><path d="M12 12L1.600 6A12 12 0 0 0 12 24z" fill="#34a853" /><path d="M12 12l10.400-6A12 12 0 0 1 12 24z" fill="#fbbc04" /><circle cx="12" cy="12" r="5.800" fill="#fff" /><circle cx="12" cy="12" r="4.500" fill="#4285f4" /></svg><MiniFace /></App43>
      <App43><svg viewBox="0 0 24 24" className="-ml-px h-6 w-6"><path d="M6.500 6V1.800h11V6" fill="none" stroke="#1bb0ee" strokeWidth="1.800" /><path d="M.5 5.500h23V21q0 2-2 2h-19q-2 0-2-2z" fill="#f4f4f4" /><path d="M7.500 9.500h4v4h-4z" fill="#f25022" /><path d="M12.500 9.500h4v4h-4z" fill="#7fba00" /><path d="M7.500 14.500h4v4h-4z" fill="#00a4ef" /><path d="M12.500 14.500h4v4h-4z" fill="#ffb900" /></svg></App43>
      <App43><svg viewBox="0 0 24 24" className="-ml-px h-6 w-6"><circle cx="12" cy="12" r="12" fill="#0d6fc4" /><path d="M1 9Q4 0 13 0q10 1 11 10 0 6-6 6-5 0-4-3 2-5-4-6-6 0-9 2z" fill="#36c3cf" /><path d="M12 0q11 0 12 10 0 6-6 6-4 0-4-2 6-2 5-7Q17 1 12 0z" fill="#52cf7c" /><path d="M10 10q-1 9 8 10l4-1Q16 26 9 23.500 3 17 10 10z" fill="#174f9e" /><path d="M14 12q-1 2 1 4 4 2 8 0l-2 3q-8 2-11-5 1-3 4-2z" fill="#3a3634" /></svg></App43>
      <App43><FaWhatsapp className="-ml-px h-[26px] w-[26px] text-[#25d366]" /><Count>42</Count></App43>
      <App43><svg viewBox="0 0 24 24" className="absolute h-0 w-0"><linearGradient id="msgr" x1="0.2" y1="1" x2="0.8" y2="0"><stop offset="0" stopColor="#0a7cff" /><stop offset=".5" stopColor="#a033ff" /><stop offset="1" stopColor="#ff5c87" /></linearGradient></svg><span className="flex h-4 w-4 bg-white"><FaFacebookMessenger className="-m-1 h-6 w-6 shrink-0 [&_path]:fill-[url(#msgr)]" /></span></App43>
      <App43><svg viewBox="0 0 24 24" className="h-6 w-6"><path d="M1 8l6-3v15H2z" fill="#b9bfc2" /><path d="M6 3l17 1v14l-16-1z" fill="#cfd3d5" /><path d="M8.500 5.500l12.500.5v9.500L9 15z" fill="#f5f9fb" /><path d="M9 12h2.500L13 7l2 7 1.500-3h4" fill="none" stroke="#3b87c2" strokeWidth="1.200" /><path d="M11 18h6l3 3H9z" fill="#c3c7ca" /></svg></App43>
      <App43><svg viewBox="0 0 24 24" className="h-[22px] w-[22px]"><rect y="4" width="24" height="16" fill="#46a6dc" /><path d="M1.500 5.500h21v13h-21z" fill="#bfe4f5" /><circle cx="7" cy="10" r="3.500" fill="#e7a72c" /><path d="M7 10V6a4 4 0 0 1 4 4z" fill="#1874c4" /><path d="M13 8h8M13 11h8M3 16h6M12 14h9v3h-9z" stroke="#1878bd" strokeWidth="1.500" fill="none" /></svg></App43>
      <App43><svg viewBox="0 0 24 24" className="h-[21px] w-[21px]"><path d="M4 2h19v19H4z" fill="#6fa4c4" /><path d="M1 3h18v19H1z" fill="#b5d6e8" /><circle cx="10" cy="12.500" r="7" fill="#f08019" /><path d="M8 8.500v8l6.500-4z" fill="#fff" /></svg></App43>
      <App43 open><svg viewBox="0 0 24 24" className="h-[23px] w-[23px]"><path d="M1 3h9l2 2.500h11V8H1z" fill="#dda228" /><path d="M1 7h22v13H1z" fill="#ffd767" /><path d="M6 20.500v-6q0-2 2-2h8q2 0 2 2v6h-3v-4H9v4z" fill="#3a92dc" /></svg></App43>
      <App42><svg viewBox="0 0 24 24" className="h-6 w-6"><circle cx="12" cy="12" r="12" fill="#f00" /><circle cx="12" cy="12" r="6.800" fill="none" stroke="#fff" strokeWidth="1.200" /><path d="M10 8.700v6.600l5.300-3.300z" fill="#fff" /></svg></App42>
      <App42><Youtube className="h-[17px] w-6" /></App42>
      <App42><svg viewBox="0 0 22 22" className="h-[22px] w-[22px]"><rect width="22" height="22" rx="1.500" fill="#0a66c2" /><circle cx="5.200" cy="5.200" r="1.900" fill="#fff" /><path d="M3.600 8.500h3.200v10H3.600zM9 8.500h3V10q1-1.700 3.200-1.700 3.600 0 3.600 4.200v6h-3.200v-5.300q0-2.200-1.600-2.200-1.900 0-1.900 2.200v5.300H9z" fill="#fff" /></svg><Count>13</Count></App42>
      <App42 open><svg viewBox="0 0 24 24" className="h-6 w-6"><rect width="24" height="24" rx="3" fill="#fff" /><path d="M9.500 3h3L8.500 19H4z" fill="#0b5ea8" /><path d="M11 3h3.500l5 16H14z" fill="#38a9e8" /><path d="M9 13h4l3 6H5z" fill="#0f7ad1" /></svg><MiniFace /></App42>
      <App42 open><span className="flex h-6 w-6 items-center justify-center rounded-[3px] bg-white"><RiOpenaiFill className="h-5 w-5 text-[#222]" /></span><MiniFace /></App42>
      <App42><svg viewBox="0 0 24 24" className="h-[23px] w-[23px]"><circle cx="12" cy="12" r="11.500" fill="#4184e6" /><path d="M1 9Q7 3 12 8t10.500-1Q19 .5 12 .5 3 1 1 9z" fill="#a9cbf9" /><path d="M.6 10Q7 6 12 11t11.300 0v4Q17 18 12 14T1 15z" fill="#2f6bd0" /></svg></App42>
      <App42><span className="flex h-[22px] w-[22px] items-center justify-center rounded-full bg-black"><FaXTwitter className="h-[14px] w-[14px]" /></span></App42>
      <App42 open><svg viewBox="0 0 24 24" className="h-6 w-6"><path d="M0 6l3-1.500L17 17v6L0 9z" fill="#7b4bb5" /><path d="M0 18V6l3-1.500v15z" fill="#8d5cc9" /><path d="M0 17.500L17 .500v7L3 19.500z" fill="#9569d3" /><path d="M17 .5l7 3v17l-7 3z" fill="#b78cf0" /></svg></App42>
      <App42><svg viewBox="0 0 24 24" className="-ml-px h-[23px] w-[23px]"><path d="M12 .5L22 6v12l-10 5.500L2 18V6z" fill="#a4c93f" /><path d="M2 6l10 5.500v12L2 18z" fill="#cf2a5b" /><path d="M22 6l-10 5.500v12L22 18z" fill="#1a86b5" /><path d="M12 5l6 3.200v7L12 18.500 6 15.200v-7z" fill="#f5f5f0" /><path d="M12 11.500l6-3.300v7l-6 3.300z" fill="#c4ced4" /></svg></App42>
      <App42><svg viewBox="0 0 24 24" className="-ml-[2px] h-6 w-6"><path d="M0 8L2.500 6 18 17.500v6z" fill="#1f8ad2" /><path d="M0 16L2.500 18 18 6.500v-6z" fill="#2aa1e8" /><path d="M17.500.500L24 3.300v17.400l-6.500 2.800z" fill="#3bb3f7" /></svg></App42>
      <App42><span className="-ml-[2px] flex h-6 w-6 rounded-full bg-white"><FaFacebook className="h-6 w-6 text-[#1490f5]" /></span><Count>5</Count></App42>
      <App42 open><span className="-ml-[3px] flex h-[22px] w-[22px] items-center justify-center rounded-full bg-[#7a2aa8]"><FaGithub className="h-4 w-4" /></span></App42>
      <div className="relative ml-[25px] h-6 w-6 shrink-0">
        <svg viewBox="0 0 24 24" className="h-6 w-6"><path d="M1.500 13q7 5 13-2 2 0 8 1-1 8-8 10.500-9 1.500-13-9.500z" fill="#f5a021" /><path d="M22.500 12q-1 8-8 10.500-5 .5-9-3 10 1 17-7.500z" fill="#ee7d14" /></svg>
        <span className="absolute -top-px left-[12px] flex h-3 w-3 items-center justify-center rounded-full bg-[#c42b1c] text-[8px]">1</span>
      </div>
      <span className="ml-[9px] w-[53px] text-[13.5px] tracking-[-0.18px]">11°C</span>
      <ChevronUp className="h-[18px] w-[18px] shrink-0" strokeWidth={1.7} />
      <svg viewBox="0 0 16 14" className="ml-[6px] h-[14px] w-4 shrink-0" fill="none" stroke="#fff" strokeWidth="1.100"><path d="M.8 5h2.400L6.500 2v10L3.200 9H.8zM8.500 5q1.300 2 0 4M10.800 3.500q2.300 3.500 0 7" /><path d="M13 2q3.300 5 0 10" stroke="#999" /></svg>
      <svg viewBox="0 0 14 14" className="ml-[10px] h-[14px] w-[14px] shrink-0" fill="none" stroke="#fff" strokeWidth="1.100"><path d="M.8 12.500Q1 2 12.500 1.500" stroke="#9c9490" /><path d="M4 12.800Q4 5 12.500 4.500M7 12.800q.2-4.500 5.500-5.300" /><circle cx="11" cy="11.500" r="1.300" fill="#fff" /></svg>
      <div className="-mt-[2px] ml-[8px] w-[56px] shrink-0 text-center text-[11.5px] leading-[18px] tracking-[-0.25px]">9:35 PM<br />10/1/2024</div>
      <svg viewBox="0 0 16 16" className="ml-[16px] h-4 w-4 shrink-0"><path d="M.6.8h14.800v11.700H10.500L8 15.200V12.500H.6z" fill="none" stroke="#fff" strokeWidth="1.200" /></svg>
      <span className="ml-auto mr-[4px] h-10 w-px bg-[#8a7f7b]" />
    </footer>
  );
}

export default function App() {
  return (
    <div className="flex h-[768px] w-[1366px] flex-col overflow-hidden font-['Open_Sans',sans-serif]">
      <TabStrip />
      <AddressBar />
      <Bookmarks />
      <Header />
      <div className="flex min-h-0 flex-1">
        <Sidebar />
        <Main />
      </div>
      <Taskbar />
    </div>
  );
}
